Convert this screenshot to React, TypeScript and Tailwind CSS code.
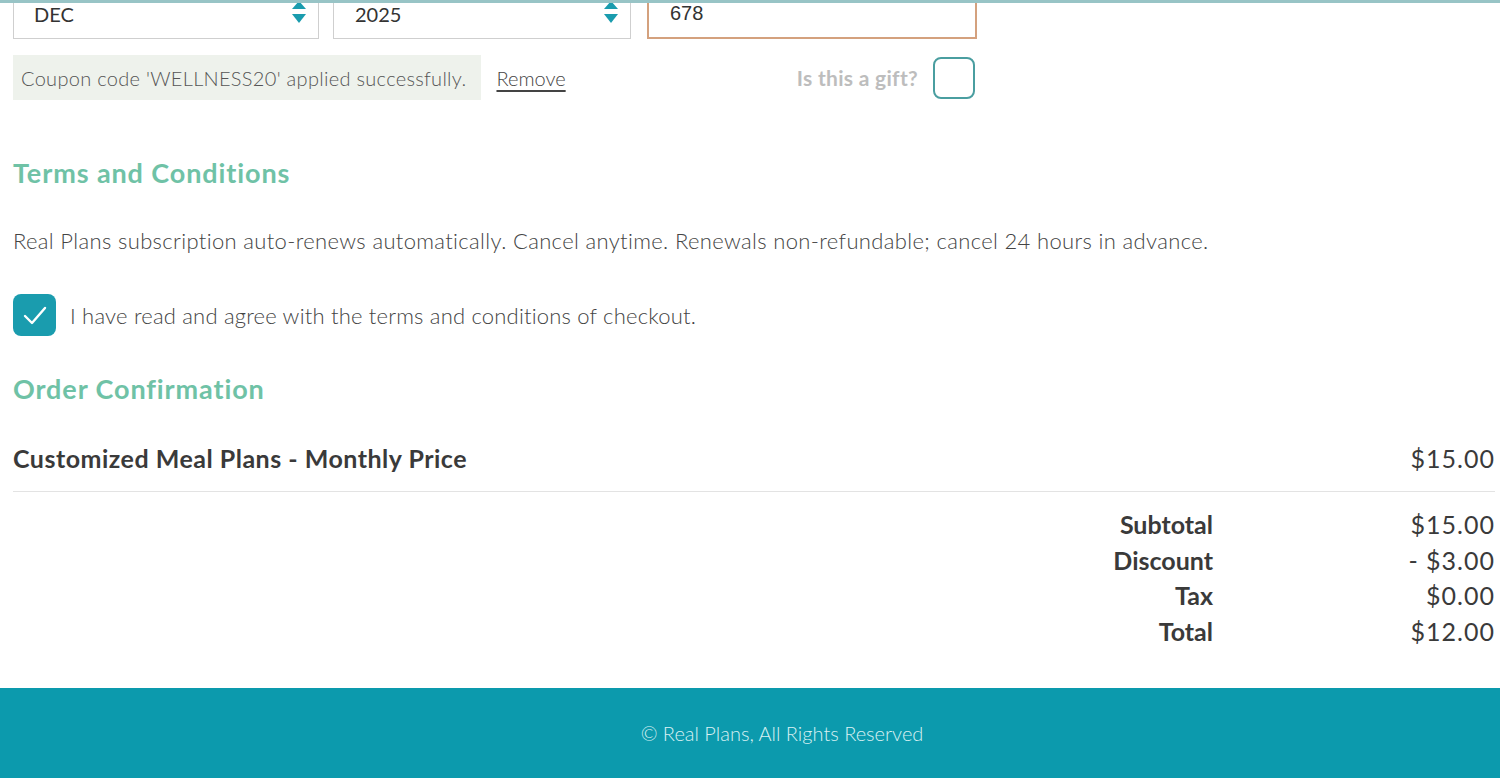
import React from 'react';

const font = { fontFamily: 'Lato, "Open Sans", sans-serif' };

function SelectArrows() {
  return (
    <svg width="18" height="26" viewBox="0 0 18 26" className="text-[#1a9cae]">
      <path d="M2 10 L9 2 L16 10 Z" fill="currentColor" />
      <path d="M2 15 L16 15 L9 24 Z" fill="currentColor" />
    </svg>
  );
}

const summary = [
  { label: 'Subtotal', val: '$15.00' },
  { label: 'Discount', val: '- $3.00' },
  { label: 'Tax', val: '$0.00' },
  { label: 'Total', val: '$12.00' },
];

export default function App() {
  return (
    <div className="relative flex min-h-[778px] w-[1500px] flex-col overflow-hidden bg-white" style={font}>
      <div className="absolute left-0 right-0 top-0 z-10 h-[3px] bg-[#98c4c6]" />

      <div className="flex flex-1 flex-col pl-[13px] pr-[5px]">
        {/* card expiry / cvv row */}
        <div className="flex h-[39px] items-stretch">
          <div className="flex w-[306px] items-center justify-between border border-t-0 border-[#cfcfcf] pl-[20px] pr-[10px] text-[20px] text-[#333]">
            <span className="-mt-[10px]">DEC</span>
            <span className="-mt-[14px]"><SelectArrows /></span>
          </div>
          <div className="ml-[14px] flex w-[298px] items-center justify-between border border-t-0 border-[#cfcfcf] pl-[21px] pr-[10px] text-[20px] text-[#333]">
            <span className="-mt-[10px]">2025</span>
            <span className="-mt-[14px]"><SelectArrows /></span>
          </div>
          <div className="ml-[16px] flex w-[330px] items-center border-2 border-t-0 border-[#d4a17e] pl-[21px] text-[20px] text-[#333]" style={{ fontFamily: '"Liberation Sans", Arial, sans-serif' }}>
            <span className="-mt-[12px]">678</span>
          </div>
        </div>

        {/* coupon + gift */}
        <div className="mt-[16px] flex h-[45px] w-[962px] items-center">
          <div className="flex h-full items-center bg-[#eef2ec] pl-[8px] pr-[15px] text-[20px] font-light tracking-[0.3px] text-[#555]">
            Coupon code 'WELLNESS20' applied successfully.
          </div>
          <a href="#" className="ml-[15px] text-[20px] font-light text-[#444] underline underline-offset-4">Remove</a>
          <div className="ml-auto flex items-center gap-[15px]">
            <span className="text-[21px] font-bold tracking-[0.3px] text-[#bdbdbd]">Is this a gift?</span>
            <span className="h-[42px] w-[42px] rounded-[8px] border-2 border-[#4a9ea0]" />
          </div>
        </div>

        {/* terms */}
        <h2 className="mt-[56px] text-[27px] font-bold leading-[34px] tracking-[0.9px] text-[#6fc2a6]">Terms and Conditions</h2>
        <p className="mt-[36px] text-[22px] font-light leading-[30px] tracking-[0.35px] text-[#444]">
          Real Plans subscription auto-renews automatically. Cancel anytime. Renewals non-refundable; cancel 24 hours in advance.
        </p>
        <label className="mt-[38px] flex items-center gap-[14px]">
          <span className="flex h-[42px] w-[43px] items-center justify-center rounded-[8px] bg-[#1a9cae]">
            <svg width="26" height="22" viewBox="0 0 26 22" fill="none">
              <path d="M3 12 L10 19 L23 4" stroke="white" strokeWidth="2.4" strokeLinecap="round" strokeLinejoin="round" />
            </svg>
          </span>
          <span className="text-[22px] font-light tracking-[0.2px] text-[#444]">I have read and agree with the terms and conditions of checkout.</span>
        </label>

        {/* order confirmation */}
        <h2 className="mt-[36px] text-[27px] font-bold leading-[34px] tracking-[0.9px] text-[#6fc2a6]">Order Confirmation</h2>
        <div className="mt-[35px] flex items-center justify-between border-b border-[#e3e3e3] pb-[16px] text-[25px] leading-[34px] text-[#3a3a3a]">
          <span className="font-bold tracking-[0.5px]">Customized Meal Plans - Monthly Price</span>
          <span className="tracking-[1px]">$15.00</span>
        </div>
        <div className="mt-[15px] flex flex-col items-end">
          {summary.map(({ label, val }) => (
            <div key={label} className="flex h-[35.5px] items-center text-[25px] text-[#3a3a3a]">
              <span className="w-[200px] text-right font-bold">{label}</span>
              <span className="w-[282px] text-right tracking-[1px]">{val}</span>
            </div>
          ))}
        </div>
      </div>

      <footer className="mt-[39px] flex h-[90px] items-center justify-center bg-[#0c9aad] pl-[64px] text-[20px] font-light text-[#d9f1f3]">
        © Real Plans, All Rights Reserved
      </footer>
    </div>
  );
}
